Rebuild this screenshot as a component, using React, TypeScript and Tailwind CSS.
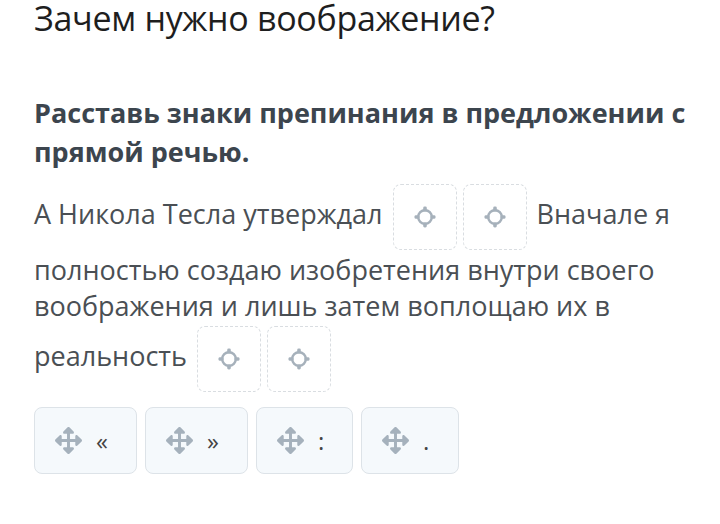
import { FaArrowsAlt } from 'react-icons/fa';

const Target = () => (
    <svg width="24" height="24" viewBox="0 0 24 24" fill="none">
        <circle cx="12" cy="12" r="6.8" stroke="#a6b1bb" strokeWidth="2.4" />
        <rect x="10.2" y="1.5" width="3.6" height="5" rx="1.4" fill="#a6b1bb" />
        <rect x="10.2" y="17.5" width="3.6" height="5" rx="1.4" fill="#a6b1bb" />
        <rect x="1.5" y="10.2" width="5" height="3.6" rx="1.4" fill="#a6b1bb" />
        <rect x="17.5" y="10.2" width="5" height="3.6" rx="1.4" fill="#a6b1bb" />
    </svg>
);

const Slot = () => (
    <span className="inline-flex align-middle items-center justify-center w-[64px] h-[66px] mx-[3px] my-[2px] rounded-lg border border-dashed border-[#d9dde1] bg-white">
        <Target />
    </span>
);

const Chip = ({ sign, width }: { sign: string; width: string }) => (
    <div className={`flex items-center h-[67px] ${width} pl-[20px] rounded-lg border border-[#dde3e8] bg-[#f5f9fc]`}>
        <FaArrowsAlt className="text-[#a5b1bc]" size={27} />
        <span className="ml-[14px] text-[24px] text-[#444]">{sign}</span>
    </div>
);

export default function App() {
    return (
        <div className="bg-white w-[720px] h-[524px] overflow-hidden pl-[34px] pr-[20px] font-['Open_Sans',sans-serif]">
            <h1 className="-mt-[5px] text-[34px] tracking-[-0.3px] leading-[1.36] text-[#1e1e1e]">Зачем нужно воображение?</h1>
            <h2 className="mt-[52px] text-[27px] font-bold leading-[39px] text-[#3c454e]">
                Расставь знаки препинания в предложении с прямой речью.
            </h2>
            <p className="mt-[11px] text-[27px] leading-[36px] text-[#4a4f54]">
                А Никола Тесла утверждал <Slot /><Slot /> Вначале я полностью создаю изобретения внутри своего воображения и лишь затем воплощаю их в реальность <Slot /><Slot />
            </p>
            <div className="mt-[13px] flex gap-[8px]">
                <Chip sign="«" width="w-[103px]" />
                <Chip sign="»" width="w-[103px]" />
                <Chip sign=":" width="w-[97px]" />
                <Chip sign="." width="w-[98px]" />
            </div>
        </div>
    );
}
